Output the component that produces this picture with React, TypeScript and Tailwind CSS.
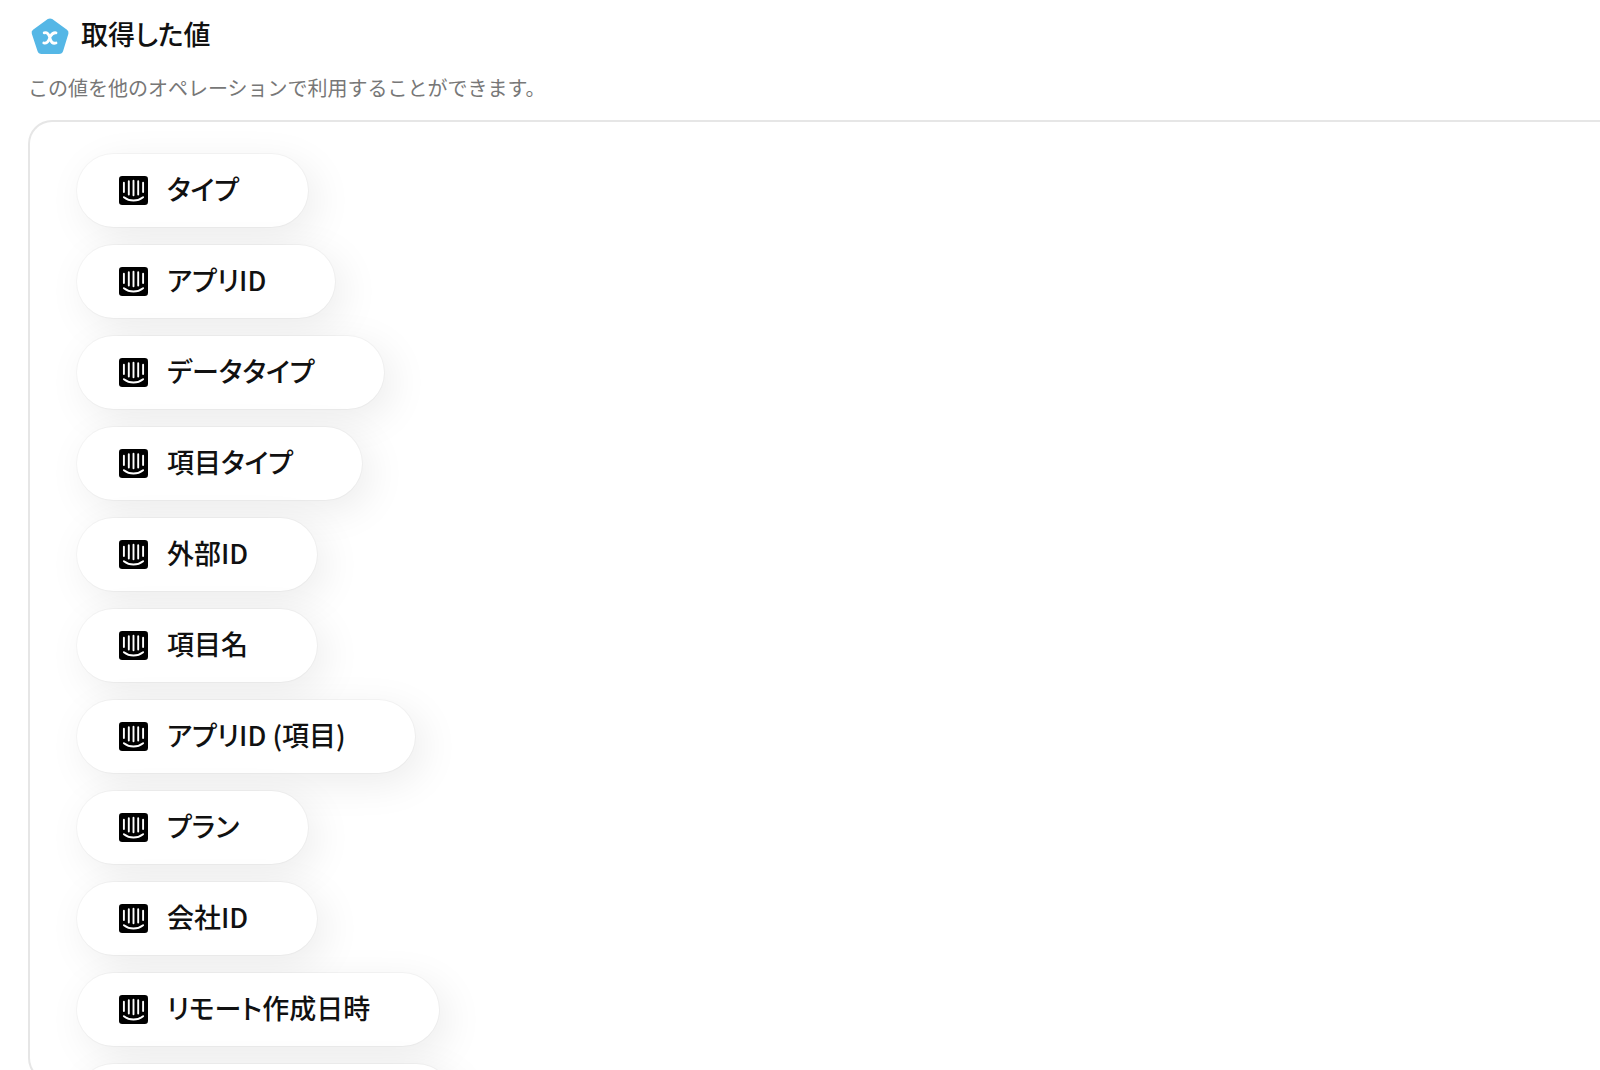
const values: string[] = [
  "タイプ",
  "アプリID",
  "データタイプ",
  "項目タイプ",
  "外部ID",
  "項目名",
  "アプリID (項目)",
  "プラン",
  "会社ID",
  "リモート作成日時",
];

function VariableIcon() {
  return (
    <svg viewBox="0 0 38 38" className="size-[38px] shrink-0" aria-hidden="true">
      <path
        d="M16.8 2.1Q19 .7 21.2 2.1L36 12.8Q38 14.4 37.4 16.8L32.2 33.8Q31.2 37 28 37H10.6Q7.4 37 6.4 33.8L.8 16.8Q0 14.4 2 12.8Z"
        fill="#55b7e6"
      />
      <path
        d="M13.2 15.8C16 15 17.2 16.6 18 18.6L19.6 23C20.4 25.4 22 26.8 25 26M25 15.8C22.4 15.4 20.8 16.8 19.6 19L17.8 23C16.8 25.2 15.4 26.6 12.8 26"
        fill="none"
        stroke="#fff"
        strokeWidth="2.8"
        strokeLinecap="round"
      />
    </svg>
  );
}

function IntercomIcon() {
  return (
    <svg viewBox="0 0 29 29" className="size-[29px] shrink-0" aria-hidden="true">
      <rect width="29" height="29" rx="3.2" fill="#000" />
      <path
        d="M4.9 6.8V16M9.8 5.2V18.6M14.5 4.8V19.2M19.2 5.2V18.6M24.1 6.8V16M4.9 21.2C10.4 25.6 18.6 25.6 24.1 21.2"
        fill="none"
        stroke="#fff"
        strokeWidth="1.9"
        strokeLinecap="round"
      />
    </svg>
  );
}

export default function App() {
  return (
    <main className="flex h-screen flex-col overflow-hidden bg-white pl-7 font-['Noto_Sans_CJK_JP',sans-serif] text-[#111]">
      <header className="flex flex-col pt-[14px]">
        <h1 className="flex items-center gap-3 pl-[3px] text-[27px] leading-10 font-medium [font-feature-settings:'palt']">
          <VariableIcon />
          <span className="pb-1">取得した値</span>
        </h1>
        <p className="pt-[14px] text-[20px] leading-8 text-[#777]">
          この値を他のオペレーションで利用することができます。
        </p>
      </header>
      <section className="mt-4 -mb-3 min-h-0 flex-1 overflow-hidden rounded-tl-3xl rounded-bl-3xl border-2 border-r-0 border-[#e6e6e6] pt-8 pl-[47px]">
        <ul className="flex flex-col items-start gap-[18px]">
          {values.map((value) => (
            <li
              key={value}
              className="flex h-[73px] shrink-0 items-center gap-[19px] rounded-full bg-white pr-[69px] pl-[42px] text-[27px] leading-10 font-medium whitespace-nowrap shadow-[0_0_0_1px_rgba(0,0,0,0.03),8px_10px_40px_rgba(0,0,0,0.08)] [font-feature-settings:'palt']"
            >
              <IntercomIcon />
              <span className="pb-[3px]">{value}</span>
            </li>
          ))}
          <li
            aria-hidden="true"
            className="h-[73px] w-[376px] shrink-0 rounded-full bg-white shadow-[0_0_0_1px_rgba(0,0,0,0.03),8px_10px_40px_rgba(0,0,0,0.08)]"
          />
        </ul>
      </section>
    </main>
  );
}
